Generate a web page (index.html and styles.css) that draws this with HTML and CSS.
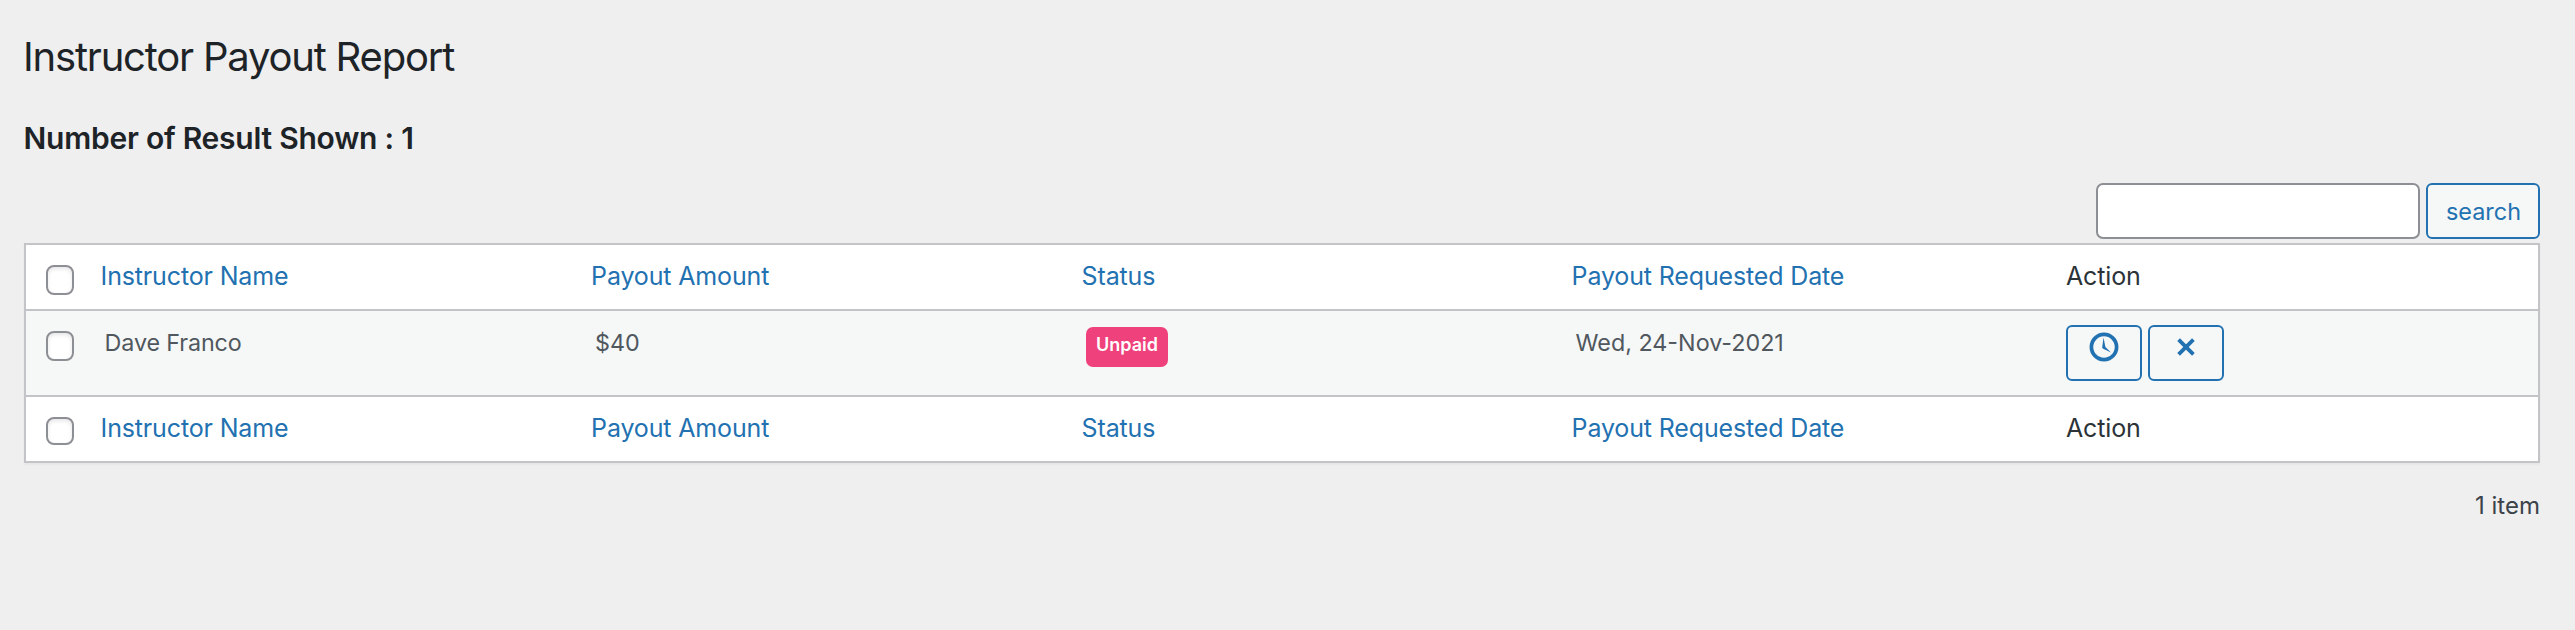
FILE: index.html
```html
<!DOCTYPE html>
<html lang="en">
<head>
<meta charset="utf-8">
<title>Instructor Payout Report</title>
<link rel="stylesheet" href="styles.css">
</head>
<body>
<main class="wrap">
  <h1 class="title">Instructor Payout Report</h1>
  <h2 class="subtitle">Number of Result Shown : 1</h2>
  <form class="search-box">
    <input class="search-input" type="text" aria-label="Search">
    <button class="button search-button" type="button">search</button>
  </form>
  <section class="table">
    <div class="row head">
      <div class="check"><input class="checkbox" type="checkbox" aria-label="Select all"></div>
      <a class="cell link">Instructor Name</a>
      <a class="cell link">Payout Amount</a>
      <a class="cell link">Status</a>
      <a class="cell link">Payout Requested Date</a>
      <div class="cell">Action</div>
    </div>
    <div class="row item">
      <div class="check"><input class="checkbox" type="checkbox" aria-label="Select row"></div>
      <div class="cell name">Dave Franco</div>
      <div class="cell">$40</div>
      <div class="cell status"><span class="badge">Unpaid</span></div>
      <div class="cell">Wed, 24-Nov-2021</div>
      <div class="cell actions">
        <button class="button icon-button" type="button" aria-label="Pending">
          <svg class="icon" viewBox="0 0 30 30"><circle cx="15" cy="15" r="12.6" fill="none" stroke="currentColor" stroke-width="3.7"/><path d="M14.5 5.6 13.2 15.4Q13.4 16.4 14.2 16.8L22 20.4 16.4 14.9Z" fill="currentColor"/></svg>
        </button>
        <button class="button icon-button" type="button" aria-label="Reject">
          <svg class="icon" viewBox="0 0 30 30"><path d="M7.6 7.6 22.4 22.4M22.4 7.6 7.6 22.4" fill="none" stroke="currentColor" stroke-width="3.8"/></svg>
        </button>
      </div>
    </div>
    <div class="row foot">
      <div class="check"><input class="checkbox" type="checkbox" aria-label="Select all"></div>
      <a class="cell link">Instructor Name</a>
      <a class="cell link">Payout Amount</a>
      <a class="cell link">Status</a>
      <a class="cell link">Payout Requested Date</a>
      <div class="cell">Action</div>
    </div>
  </section>
  <p class="count">1 item</p>
</main>
</body>
</html>
```
FILE: styles.css
```css
* { box-sizing: border-box; }
body {
  margin: 0;
  background: #efefef;
  color: #3c434a;
  font-family: Inter, "Liberation Sans", sans-serif;
}
.wrap { padding: 32px 35px 0 24px; }
.title {
  margin: 0 0 36px -1px;
  color: #1d2327;
  font-size: 40px;
  font-weight: 400;
  line-height: 50px;
  letter-spacing: -1.2px;
}
.subtitle {
  margin: 0 0 25px -0.5px;
  color: #1d2327;
  font-size: 30px;
  font-weight: 600;
  line-height: 40px;
  letter-spacing: -0.24px;
}
.search-box {
  display: flex;
  justify-content: flex-end;
  gap: 6px;
  margin-bottom: 4px;
}
.search-input {
  width: 324px;
  height: 56px;
  border: 2px solid #8c8f94;
  border-radius: 7px;
  background: #fff;
}
.button {
  height: 56px;
  padding: 0;
  border: 2px solid #2271b1;
  border-radius: 6px;
  background: #f6f7f7;
  color: #2271b1;
  font-family: inherit;
}
.search-button { width: 114px; padding-left: 1px; font-size: 23.4px; }
.table {
  border: 2px solid #c3c4c7;
  background: #fff;
  box-shadow: 0 2px 2px rgba(0, 0, 0, 0.04);
}
.row {
  display: grid;
  grid-template-columns: 74.6px 490.5px 490.5px 490px 494.4px 1fr;
}
.head, .foot {
  height: 64px;
  padding-top: 13px;
  color: #2c3338;
  font-size: 25px;
  line-height: 36px;
  letter-spacing: -0.15px;
}
.link { color: #2271b1; }
.item {
  height: 88px;
  padding-top: 14px;
  border-top: 2px solid #c3c4c7;
  border-bottom: 2px solid #c3c4c7;
  background: #f6f7f7;
  color: #50575e;
  font-size: 23.3px;
  line-height: 36px;
}
.item .cell { padding-left: 4px; }
.item .name { letter-spacing: -0.12px; }
.check { padding-left: 20px; }
.head .check { padding-top: 7px; }
.item .check { padding-top: 6px; }
.foot .check { padding-top: 7px; }
.checkbox {
  display: block;
  appearance: none;
  width: 28px;
  height: 30px;
  margin: 0;
  border: 2px solid #8c8f94;
  border-radius: 8px;
  background: #fff;
  box-shadow: inset 0 2px 4px rgba(0, 0, 0, 0.1);
}
.foot .checkbox { height: 28px; }
.item .status { padding: 2px 0 0 4.4px; }
.badge {
  display: block;
  width: 82px;
  height: 40px;
  border-radius: 7px;
  background: #ef417c;
  color: #fff;
  font-size: 18px;
  font-weight: 600;
  line-height: 35px;
  text-align: center;
}
.item .actions { display: flex; gap: 6px; padding-left: 0; }
.icon-button {
  display: flex;
  justify-content: center;
  width: 76px;
  padding-top: 5px;
}
.icon { width: 30px; height: 30px; }
.count {
  margin: 25px 0 0;
  font-size: 24px;
  line-height: 36px;
  text-align: right;
}
```
